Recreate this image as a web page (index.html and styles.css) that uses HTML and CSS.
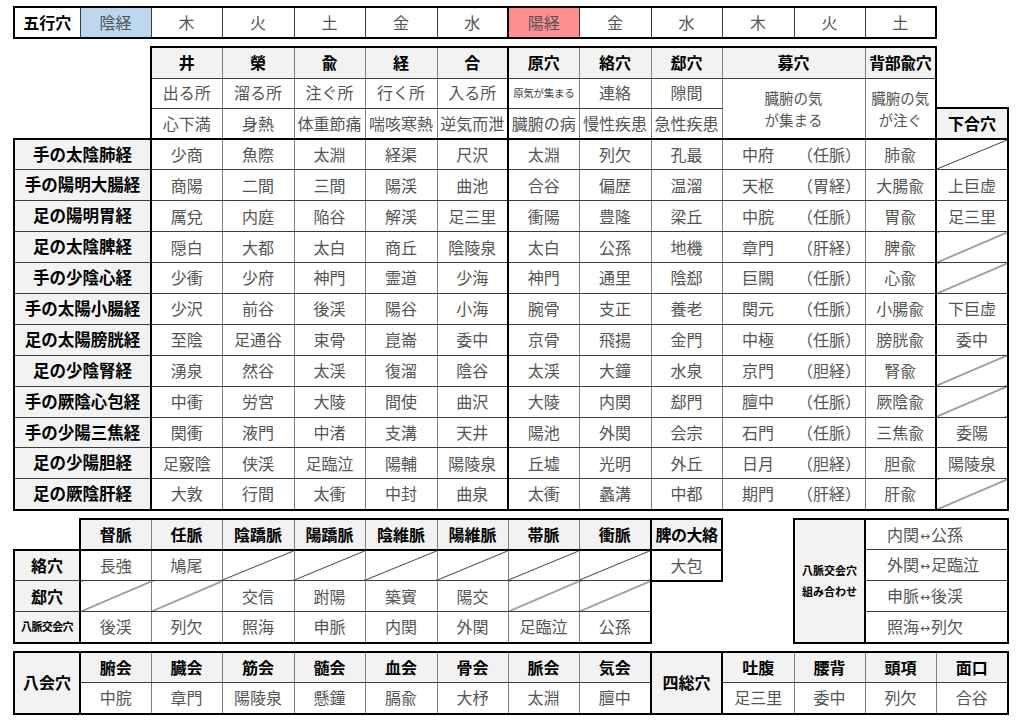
FILE: index.html
```html
<!DOCTYPE html>
<html lang="ja">
<head>
<meta charset="utf-8">
<title>要穴一覧表</title>
<link rel="stylesheet" href="styles.css">
</head>
<body>
<main class="page">

  <table class="sheet gogyo">
    <colgroup><col class="k66"><col class="k71"><col class="k71"><col class="k72"><col class="k71"><col class="k72"><col class="k71"><col class="k71"><col class="k72"><col class="k71"><col class="k72"><col class="k71"><col class="k71"></colgroup>
    <tr>
      <td class="title">五行穴</td><td class="yin">陰経</td><td>木</td><td>火</td><td>土</td><td>金</td><td>水</td>
      <td class="yang">陽経</td><td>金</td><td>水</td><td>木</td><td>火</td><td>土</td>
    </tr>
  </table>

  <table class="sheet main">
    <colgroup><col class="k66"><col class="k71"><col class="k71"><col class="k72"><col class="k71"><col class="k72"><col class="k71"><col class="k71"><col class="k72"><col class="k71"><col class="k72"><col class="k71"><col class="k71"><col class="k72"></colgroup>
    <thead>
      <tr class="r31">
        <td class="e" colspan="2"></td>
        <td class="h">井</td><td class="h">榮</td><td class="h">兪</td><td class="h">経</td><td class="h">合</td>
        <td class="h">原穴</td><td class="h">絡穴</td><td class="h">郄穴</td>
        <td class="h" colspan="2">募穴</td><td class="h wide">背部兪穴</td>
        <td class="e"></td>
      </tr>
      <tr class="r30">
        <td class="e" colspan="2"></td>
        <td>出る所</td><td>溜る所</td><td>注ぐ所</td><td>行く所</td><td>入る所</td>
        <td class="tiny">原気が集まる</td><td>連絡</td><td>隙間</td>
        <td class="note" colspan="2" rowspan="2">臓腑の気<br>が集まる</td>
        <td class="note" rowspan="2">臓腑の気<br>が注ぐ</td>
        <td class="e"></td>
      </tr>
      <tr class="r31">
        <td class="e" colspan="2"></td>
        <td>心下満</td><td>身熱</td><td>体重節痛</td><td>喘咳寒熱</td><td>逆気而泄</td>
        <td>臓腑の病</td><td>慢性疾患</td><td>急性疾患</td>
        <td class="h kago">下合穴</td>
      </tr>
    </thead>
    <tbody>
      <tr><td class="h lbl" colspan="2">手の太陰肺経</td><td>少商</td><td>魚際</td><td>太淵</td><td>経渠</td><td>尺沢</td><td>太淵</td><td>列欠</td><td>孔最</td><td colspan="2"><div class="split"><span>中府</span><span>（任脈）</span></div></td><td>肺兪</td><td class="diag"></td></tr>
      <tr><td class="h lbl" colspan="2">手の陽明大腸経</td><td>商陽</td><td>二間</td><td>三間</td><td>陽渓</td><td>曲池</td><td>合谷</td><td>偏歴</td><td>温溜</td><td colspan="2"><div class="split"><span>天枢</span><span>（胃経）</span></div></td><td>大腸兪</td><td>上巨虚</td></tr>
      <tr><td class="h lbl" colspan="2">足の陽明胃経</td><td>厲兌</td><td>内庭</td><td>陥谷</td><td>解渓</td><td>足三里</td><td>衝陽</td><td>豊隆</td><td>梁丘</td><td colspan="2"><div class="split"><span>中脘</span><span>（任脈）</span></div></td><td>胃兪</td><td>足三里</td></tr>
      <tr><td class="h lbl" colspan="2">足の太陰脾経</td><td>隠白</td><td>大都</td><td>太白</td><td>商丘</td><td>陰陵泉</td><td>太白</td><td>公孫</td><td>地機</td><td colspan="2"><div class="split"><span>章門</span><span>（肝経）</span></div></td><td>脾兪</td><td class="diag"></td></tr>
      <tr><td class="h lbl" colspan="2">手の少陰心経</td><td>少衝</td><td>少府</td><td>神門</td><td>霊道</td><td>少海</td><td>神門</td><td>通里</td><td>陰郄</td><td colspan="2"><div class="split"><span>巨闕</span><span>（任脈）</span></div></td><td>心兪</td><td class="diag"></td></tr>
      <tr><td class="h lbl" colspan="2">手の太陽小腸経</td><td>少沢</td><td>前谷</td><td>後渓</td><td>陽谷</td><td>小海</td><td>腕骨</td><td>支正</td><td>養老</td><td colspan="2"><div class="split"><span>関元</span><span>（任脈）</span></div></td><td>小腸兪</td><td>下巨虚</td></tr>
      <tr><td class="h lbl" colspan="2">足の太陽膀胱経</td><td>至陰</td><td>足通谷</td><td>束骨</td><td>崑崙</td><td>委中</td><td>京骨</td><td>飛揚</td><td>金門</td><td colspan="2"><div class="split"><span>中極</span><span>（任脈）</span></div></td><td>膀胱兪</td><td>委中</td></tr>
      <tr><td class="h lbl" colspan="2">足の少陰腎経</td><td>湧泉</td><td>然谷</td><td>太渓</td><td>復溜</td><td>陰谷</td><td>太渓</td><td>大鐘</td><td>水泉</td><td colspan="2"><div class="split"><span>京門</span><span>（胆経）</span></div></td><td>腎兪</td><td class="diag"></td></tr>
      <tr><td class="h lbl" colspan="2">手の厥陰心包経</td><td>中衝</td><td>労宮</td><td>大陵</td><td>間使</td><td>曲沢</td><td>大陵</td><td>内関</td><td>郄門</td><td colspan="2"><div class="split"><span>膻中</span><span>（任脈）</span></div></td><td>厥陰兪</td><td class="diag"></td></tr>
      <tr><td class="h lbl" colspan="2">手の少陽三焦経</td><td>関衝</td><td>液門</td><td>中渚</td><td>支溝</td><td>天井</td><td>陽池</td><td>外関</td><td>会宗</td><td colspan="2"><div class="split"><span>石門</span><span>（任脈）</span></div></td><td>三焦兪</td><td>委陽</td></tr>
      <tr><td class="h lbl" colspan="2">足の少陽胆経</td><td>足竅陰</td><td>侠渓</td><td>足臨泣</td><td>陽輔</td><td>陽陵泉</td><td>丘墟</td><td>光明</td><td>外丘</td><td colspan="2"><div class="split"><span>日月</span><span>（胆経）</span></div></td><td>胆兪</td><td>陽陵泉</td></tr>
      <tr><td class="h lbl" colspan="2">足の厥陰肝経</td><td>大敦</td><td>行間</td><td>太衝</td><td>中封</td><td>曲泉</td><td>太衝</td><td>蠡溝</td><td>中都</td><td colspan="2"><div class="split"><span>期門</span><span>（肝経）</span></div></td><td>肝兪</td><td class="diag"></td></tr>
    </tbody>
  </table>

  <table class="sheet kikei">
    <colgroup><col class="k66"><col class="k71"><col class="k71"><col class="k72"><col class="k71"><col class="k72"><col class="k71"><col class="k71"><col class="k72"><col class="k71"><col class="k72"><col class="k71"><col class="k71"><col class="k72"></colgroup>
    <tr>
      <td class="e"></td>
      <td class="h">督脈</td><td class="h">任脈</td><td class="h">陰蹻脈</td><td class="h">陽蹻脈</td><td class="h">陰維脈</td><td class="h">陽維脈</td><td class="h">帯脈</td><td class="h">衝脈</td>
      <td class="h box wide">脾の大絡</td>
      <td class="e"></td>
      <td class="h plbl" rowspan="4">八脈交会穴<br>組み合わせ</td>
      <td class="pair" colspan="2">内関<span class="arw">↔</span>公孫</td>
    </tr>
    <tr>
      <td class="h">絡穴</td>
      <td>長強</td><td>鳩尾</td><td class="diag"></td><td class="diag"></td><td class="diag"></td><td class="diag"></td><td class="diag"></td><td class="diag"></td>
      <td class="box">大包</td>
      <td class="e"></td>
      <td class="pair" colspan="2">外関<span class="arw">↔</span>足臨泣</td>
    </tr>
    <tr>
      <td class="h">郄穴</td>
      <td class="diag"></td><td class="diag"></td><td>交信</td><td>跗陽</td><td>築賓</td><td>陽交</td><td class="diag"></td><td class="diag"></td>
      <td class="e"></td>
      <td class="e"></td>
      <td class="pair" colspan="2">申脈<span class="arw">↔</span>後渓</td>
    </tr>
    <tr>
      <td class="h mini">八脈交会穴</td>
      <td>後渓</td><td>列欠</td><td>照海</td><td>申脈</td><td>内関</td><td>外関</td><td>足臨泣</td><td>公孫</td>
      <td class="e"></td>
      <td class="e"></td>
      <td class="pair" colspan="2">照海<span class="arw">↔</span>列欠</td>
    </tr>
  </table>

  <table class="sheet hakkai">
    <colgroup><col class="k66"><col class="k71"><col class="k71"><col class="k72"><col class="k71"><col class="k72"><col class="k71"><col class="k71"><col class="k72"><col class="k71"><col class="k72"><col class="k71"><col class="k71"><col class="k72"></colgroup>
    <tr>
      <td class="h lab" rowspan="2">八会穴</td>
      <td class="h">腑会</td><td class="h">臓会</td><td class="h">筋会</td><td class="h">髄会</td><td class="h">血会</td><td class="h">骨会</td><td class="h">脈会</td><td class="h">気会</td>
      <td class="h lab" rowspan="2">四総穴</td>
      <td class="h">吐腹</td><td class="h">腰背</td><td class="h">頭項</td><td class="h">面口</td>
    </tr>
    <tr>
      <td>中脘</td><td>章門</td><td>陽陵泉</td><td>懸鐘</td><td>膈兪</td><td>大杼</td><td>太淵</td><td>膻中</td>
      <td>足三里</td><td>委中</td><td>列欠</td><td>合谷</td>
    </tr>
  </table>

</main>
</body>
</html>
```

FILE: styles.css
```css
* {
  box-sizing: border-box;
}

html,
body {
  margin: 0;
  background: #ffffff;
}

body {
  font-family: "Noto Sans CJK JP", "Noto Sans", sans-serif;
  color: #595959;
}

.page {
  display: flex;
  flex-direction: column;
  align-items: flex-start;
  gap: 7px;
  padding: 6px 0 0 13px;
}

/* ---------- shared spreadsheet look ---------- */
.sheet {
  border-collapse: collapse;
  table-layout: fixed;
  border: 2px solid #000;
  width: 996px;
}

.k66 { width: 66px; }
.k71 { width: 71px; }
.k72 { width: 72px; }

.sheet td {
  border: 1px solid #808080;
  border-top-color: #3c3c3c;
  border-bottom-color: #3c3c3c;
  padding: 0;
  height: 31px;
  text-align: center;
  vertical-align: middle;
  white-space: nowrap;
  overflow: hidden;
  font-size: 16px;
  line-height: 1.2;
  color: #555555;
}

.sheet .h {
  background: #f2f2f2;
  color: #000;
  font-weight: 700;
}

.sheet .wide {
  letter-spacing: -0.5px;
}

.sheet .diag {
  background: linear-gradient(to bottom right,
      transparent calc(50% - 0.9px),
      #3a3a3a 50%,
      transparent calc(50% + 0.9px));
}

.sheet .e {
  border-style: none;
}

/* ---------- 五行穴 row ---------- */
.gogyo {
  width: 924px;
}

.gogyo td {
  border-color: #3c3c3c;
}

.gogyo .title {
  color: #000;
  font-weight: 700;
}

.gogyo .yin {
  background: #bdd7ee;
}

.gogyo .yang {
  background: #ff8f8f;
  border-left: 2px solid #000;
}

/* ---------- main table ---------- */
.main .r31 td { height: 31px; }
.main .r30 td { height: 30px; }
.main tbody td { height: 30.9px; }

.main td:nth-child(2),
.main td:nth-child(7),
.main tbody td:nth-child(12) {
  border-left: 2px solid #000;
}

.main thead tr:first-child td.e {
  border-top-style: hidden;
}

.main thead td.e:first-child {
  border-left-style: hidden;
}

.main thead td.e:last-child {
  border-right-style: hidden;
  border-left: 2px solid #000;
}

.main tbody tr:first-child td {
  border-top: 2px solid #000;
}

.main .lbl {
  font-size: 16.5px;
}

.main .tiny {
  font-size: 10.5px;
  color: #404040;
  letter-spacing: -0.3px;
}

.main .note {
  font-size: 14.5px;
  line-height: 22px;
  padding-top: 1px;
}

.main .kago {
  border: 2px solid #000;
}

.split {
  display: flex;
}

.split span {
  flex: 1 1 0;
  text-align: center;
}

/* ---------- 奇経 table ---------- */
.kikei tr:first-child td.e {
  border-top-style: hidden;
}

.kikei tr:last-child td.e {
  border-bottom-style: hidden;
}

.kikei tr > td:first-child {
  border-right: 2px solid #000;
}

.kikei tr:first-child td.e:first-child {
  border-left-style: hidden;
}

.kikei tr:first-child td.h {
  border-bottom: 2px solid #000;
}

.kikei tr:nth-child(2) td:first-child {
  border-top: 2px solid #000;
}

.kikei td:nth-child(9) {
  border-right: 2px solid #000;
}

.kikei .box,
.kikei .plbl {
  border: 2px solid #000;
}

.kikei .mini {
  font-size: 11px;
  letter-spacing: -0.6px;
}

.kikei .plbl {
  font-size: 11px;
  line-height: 21px;
}

.kikei .pair {
  text-align: left;
  padding-left: 21px;
}

.arw {
  font-family: "DejaVu Sans", sans-serif;
  font-size: 12px;
  margin: 0 1px;
  position: relative;
  top: -1px;
}

/* ---------- 八会穴 / 四総穴 ---------- */
.hakkai .lab {
  border: 2px solid #000;
}
```
